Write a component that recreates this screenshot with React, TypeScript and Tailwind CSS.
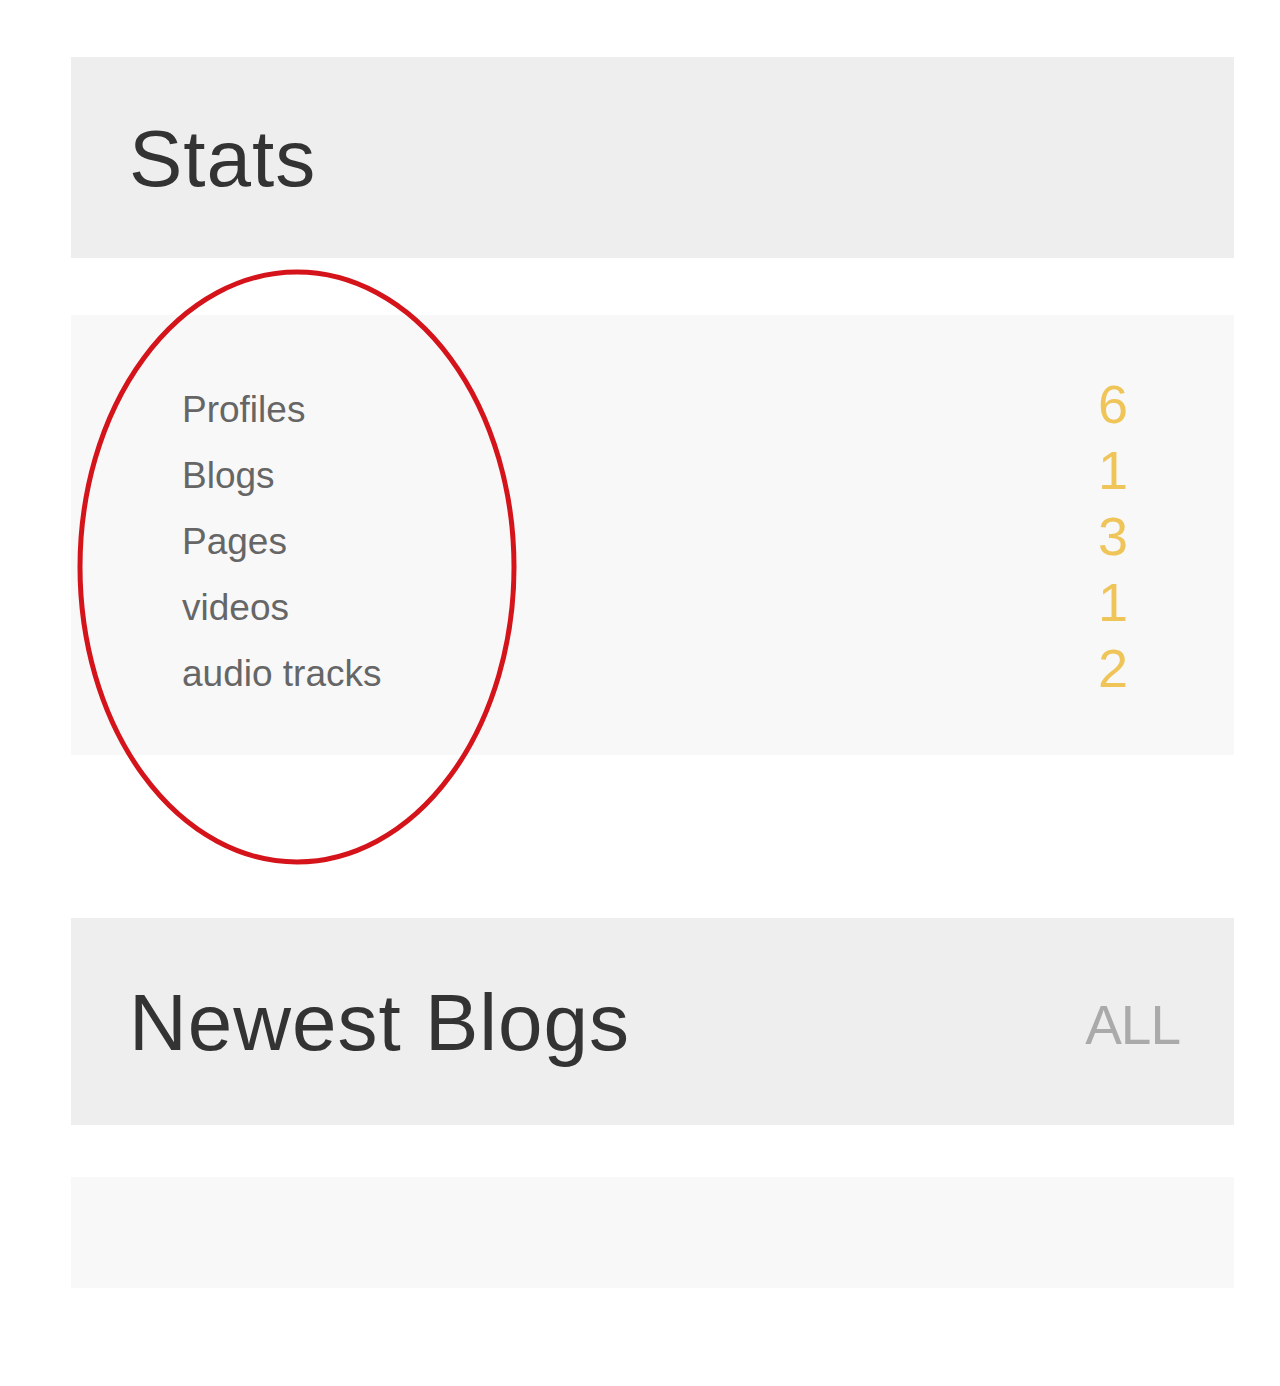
import React from "react";

const stats = [
  { label: "Profiles", value: 6 },
  { label: "Blogs", value: 1 },
  { label: "Pages", value: 3 },
  { label: "videos", value: 1 },
  { label: "audio tracks", value: 2 },
];

export default function App() {
  return (
    <div
      className="relative w-[1280px] h-[1386px] bg-white overflow-hidden"
      style={{ fontFamily: '"Liberation Sans", Arial, sans-serif' }}
    >
      <div className="pt-[57px] pl-[71px] pr-[46px] flex flex-col">
        <div className="h-[201px] bg-[#eeeeee] flex items-center pl-[58px]">
          <h2 className="text-[80px] leading-none text-[#333333] tracking-[1px] mt-[2px]">Stats</h2>
        </div>
        <div className="mt-[57px] h-[440px] bg-[#f8f8f8] pt-[61px] pl-[111px] pr-[106px]">
          <div className="flex flex-col">
            {stats.map((s) => (
              <div key={s.label} className="h-[66px] flex items-center justify-between">
                <span className="text-[37px] leading-none text-[#666666]">{s.label}</span>
                <span className="text-[54px] leading-none text-[#efc55a] -mt-[10px]">{s.value}</span>
              </div>
            ))}
          </div>
        </div>
        <div className="mt-[163px] h-[207px] bg-[#eeeeee] flex items-center justify-between pl-[58px] pr-[54px]">
          <h2 className="text-[80px] leading-none text-[#333333] tracking-[1px] mt-[2px]">Newest Blogs</h2>
          <span className="text-[55px] leading-none text-[#aaaaaa] tracking-[-1px] mt-[8px]">ALL</span>
        </div>
        <div className="mt-[52px] h-[111px] bg-[#f8f8f8]" />
      </div>
      <svg
        className="absolute left-0 top-0 pointer-events-none"
        width="1280"
        height="1386"
        viewBox="0 0 1280 1386"
      >
        <ellipse cx="297" cy="567" rx="217" ry="295" fill="none" stroke="#d4141a" strokeWidth="5" />
      </svg>
    </div>
  );
}
